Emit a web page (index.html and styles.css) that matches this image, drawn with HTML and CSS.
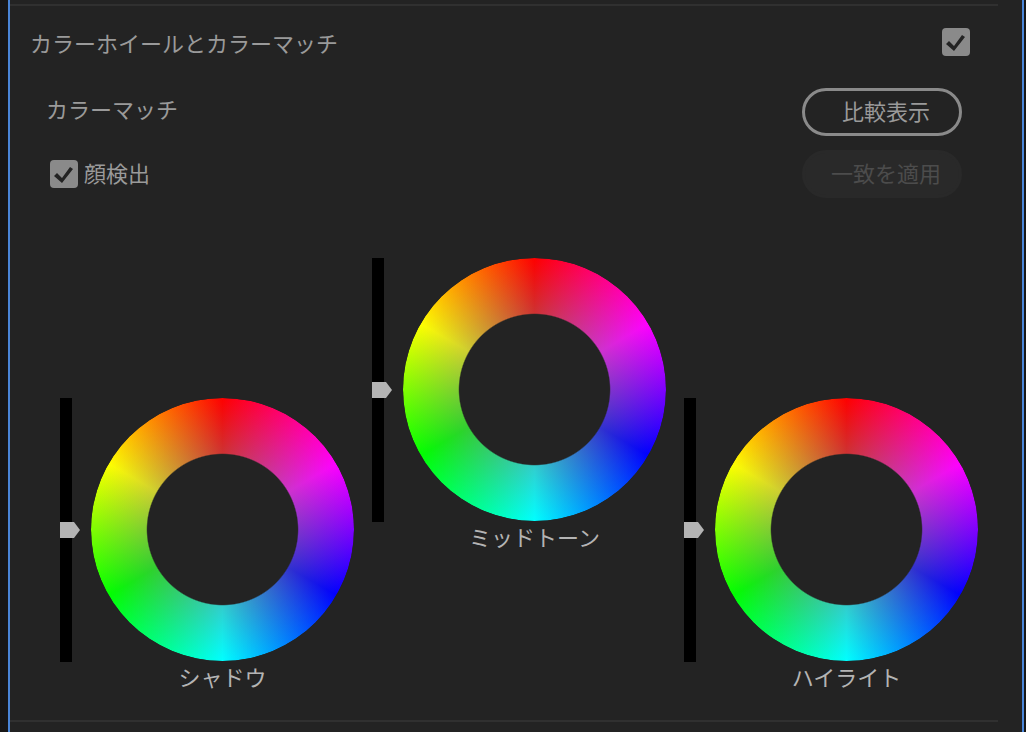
FILE: index.html
```
<!DOCTYPE html>
<html lang="ja">

<head>
  <meta charset="utf-8">
  <title>カラーホイールとカラーマッチ</title>
  <meta name="viewport" content="width=device-width, initial-scale=1">
  <link rel="stylesheet" href="styles.css">
</head>

<body>
  <main class="panel">
    <section class="section">
      <header class="section-header">
        <label for="sectionOn">カラーホイールとカラーマッチ</label>
        <input type="checkbox" class="check" id="sectionOn" checked>
      </header>

      <div class="match">
        <div class="row">
          <h2 class="subtitle">カラーマッチ</h2>
          <button type="button" class="btn">比較表示</button>
        </div>
        <div class="row">
          <div class="field">
            <input type="checkbox" class="check" id="faceDetect" checked>
            <label for="faceDetect">顔検出</label>
          </div>
          <button type="button" class="btn" disabled>一致を適用</button>
        </div>
      </div>

      <div class="wheels">
        <div class="control">
          <input type="range" class="slider" id="shadow" min="-100" max="100" value="0">
          <div class="wheel"></div>
          <label class="wheel-label" for="shadow">シャドウ</label>
        </div>
        <div class="control control-mid">
          <input type="range" class="slider" id="midtone" min="-100" max="100" value="0">
          <div class="wheel"></div>
          <label class="wheel-label" for="midtone">ミッドトーン</label>
        </div>
        <div class="control">
          <input type="range" class="slider" id="highlight" min="-100" max="100" value="0">
          <div class="wheel"></div>
          <label class="wheel-label" for="highlight">ハイライト</label>
        </div>
      </div>
    </section>
  </main>
</body>

</html>
```

FILE: styles.css
```
* {
  box-sizing: border-box;
}

body {
  margin: 0;
  padding: 0 2px 0 8px;
  background-color: #171717;
  color: #9a9a9a;
  font-family: "Noto Sans CJK JP", sans-serif;
  font-size: 22px;
  line-height: 28px;
}

.panel {
  min-height: 100vh;
  padding-top: 4px;
  border-left: 2px solid #4a86d8;
  border-right: 2px solid #4a86d8;
  background-color: #232323;
}

.section {
  border-top: 2px solid #303030;
  border-bottom: 2px solid #303030;
  margin-right: 24px;
  padding-bottom: 30px;
}

.section-header {
  display: flex;
  justify-content: space-between;
  align-items: flex-start;
  padding: 22px 28px 0 20px;
}

.check {
  appearance: none;
  flex: none;
  width: 28px;
  height: 28px;
  margin: 0;
  border-radius: 4px;
  background-color: #8a8a8a;
}

.check:checked::before {
  content: "";
  display: block;
  width: 28px;
  height: 28px;
  background-color: #232323;
  clip-path: polygon(4px 16px, 7px 13px, 12px 18px, 20px 7px, 23px 9px, 12px 23px);
}

.match {
  display: flex;
  flex-direction: column;
  gap: 14px;
  padding: 32px 36px 0 36px;
}

.row {
  display: flex;
  justify-content: space-between;
  align-items: center;
}

.subtitle {
  margin: 0;
  padding-bottom: 8px;
  font-size: 22px;
  font-weight: normal;
}

.field {
  display: flex;
  align-items: center;
  gap: 6px;
  padding-left: 4px;
}

.field label {
  padding-bottom: 4px;
}

.btn {
  width: 160px;
  height: 48px;
  padding: 0 0 4px 8px;
  border: 3px solid #8a8a8a;
  border-radius: 24px;
  background: none;
  color: #9a9a9a;
  font: inherit;
}

.btn:disabled {
  border-color: #292929;
  background-color: #292929;
  color: #4c4c4c;
}

.wheels {
  display: flex;
  justify-content: space-between;
  align-items: flex-end;
  margin-right: -24px;
  padding: 60px 44px 0 50px;
}

.control {
  display: grid;
  grid-template-columns: 20px 263px;
  column-gap: 11px;
}

.control-mid {
  margin-bottom: 140px;
}

.slider {
  appearance: none;
  writing-mode: vertical-lr;
  direction: rtl;
  width: 20px;
  height: 264px;
  margin: 0;
  background: linear-gradient(#000, #000) left / 12px 100% no-repeat;
}

.slider::-webkit-slider-thumb {
  appearance: none;
  width: 20px;
  height: 16px;
  background-color: #b4b4b4;
  clip-path: polygon(0 0, 14px 0, 100% 50%, 14px 100%, 0 100%);
}

.wheel {
  height: 263px;
  border-radius: 50%;
  background:
    radial-gradient(closest-side, rgba(128, 128, 128, 0.4) 57%, rgba(128, 128, 128, 0) 100%),
    conic-gradient(#f00, #f0f, #00f, #0ff, #0f0, #ff0, #f00);
  /* cut the hole in the ring */
  mask: radial-gradient(closest-side, transparent 57%, #000 58%);
}

.wheel-label {
  grid-column: 2;
  color: #b4b4b4;
  text-align: center;
}
```
